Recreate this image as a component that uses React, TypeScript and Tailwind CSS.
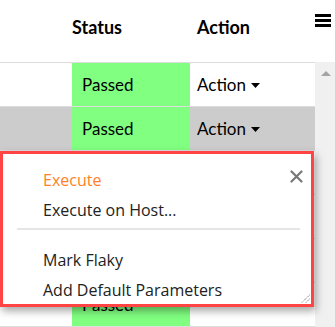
import React from "react";

function Caret() {
  return (
    <svg width="9" height="5" viewBox="0 0 9 5" className="ml-[5px] mt-[2px]">
      <polygon points="0,0 9,0 4.5,5" fill="#000" />
    </svg>
  );
}

function Row({ selected, text, action }: { selected?: boolean; text?: boolean; action?: boolean }) {
  return (
    <div
      className={
        "flex h-[44px] border-b border-[#dddddd] " +
        (selected ? "bg-[#cccccc]" : "bg-white")
      }
    >
      <div className="w-[72px]" />
      <div className="w-[118px] bg-[#80ff80] pl-[10px] flex items-center text-[17px] text-black">
        {text ? "Passed" : null}
      </div>
      <div className="flex-1 pl-[7px] flex items-center text-[17px] text-black">
        {action ? (
          <>
            Action
            <Caret />
          </>
        ) : null}
      </div>
    </div>
  );
}

export default function App() {
  return (
    <div
      className="relative w-[335px] h-[327px] overflow-hidden bg-white"
      style={{ fontFamily: "Lato, 'Open Sans', sans-serif" }}
    >
      {/* Header */}
      <div className="flex h-[62px]">
        <div className="w-[72px]" />
        <div className="w-[118px] pt-[15px] text-[18px] font-bold leading-[24px] text-black">
          Status
        </div>
        <div className="w-[125px] pl-[7px] pt-[15px] text-[18px] font-bold leading-[24px] text-black">
          Action
        </div>
        <div className="w-[20px] pt-[14px] flex flex-col gap-[2px]">
          <div className="h-[3px] w-[16px] bg-black" />
          <div className="h-[3px] w-[16px] bg-black" />
          <div className="h-[3px] w-[16px] bg-black" />
        </div>
      </div>

      {/* Body */}
      <div className="flex">
        <div className="w-[315px] border-t border-[#dddddd]">
          <Row text action />
          <Row selected text action />
          <Row />
          <Row />
          <Row />
          <Row text />
        </div>
        <div className="w-[20px] h-[265px] bg-[#f0f0f0] pt-[9px] pl-[6px]">
          <svg width="10" height="5" viewBox="0 0 10 5">
            <polygon points="0,5 10,5 5,0" fill="#a3a3a3" />
          </svg>
        </div>
      </div>

      {/* Popup menu */}
      <div
        className="absolute left-0 top-[151px] w-[314px] h-[156px] border-[3px] border-[#ff4444] bg-white shadow-[2px_4px_8px_rgba(0,0,0,0.35)]"
        style={{ fontFamily: "'Open Sans', 'Noto Sans', sans-serif" }}
      >
        <div className="pt-[11px] text-[16px] leading-[30px]">
          <div className="pl-[40px] text-[#ff7f2a]">Execute</div>
          <div className="pl-[40px] text-[#222222]">Execute on Host...</div>
          <div className="mt-[3px] mb-[15px] ml-[14px] mr-[11px] h-[2px] bg-[#e6e6e6]" />
          <div className="pl-[40px] text-[#222222]">Mark Flaky</div>
          <div className="pl-[40px] text-[#222222]">Add Default Parameters</div>
        </div>
        <svg
          width="13"
          height="13"
          viewBox="0 0 13 13"
          className="absolute top-[16px] right-[8px]"
        >
          <path d="M1.5 1.5 L11.5 11.5 M11.5 1.5 L1.5 11.5" stroke="#777777" strokeWidth="2.2" strokeLinecap="round" />
        </svg>
        <svg
          width="9"
          height="9"
          viewBox="0 0 9 9"
          className="absolute right-[1px] bottom-[1px]"
        >
          <path d="M8.5 1 L1 8.5 M8.5 5 L5 8.5" stroke="#555555" strokeWidth="1" strokeDasharray="1 1" />
        </svg>
      </div>
    </div>
  );
}
